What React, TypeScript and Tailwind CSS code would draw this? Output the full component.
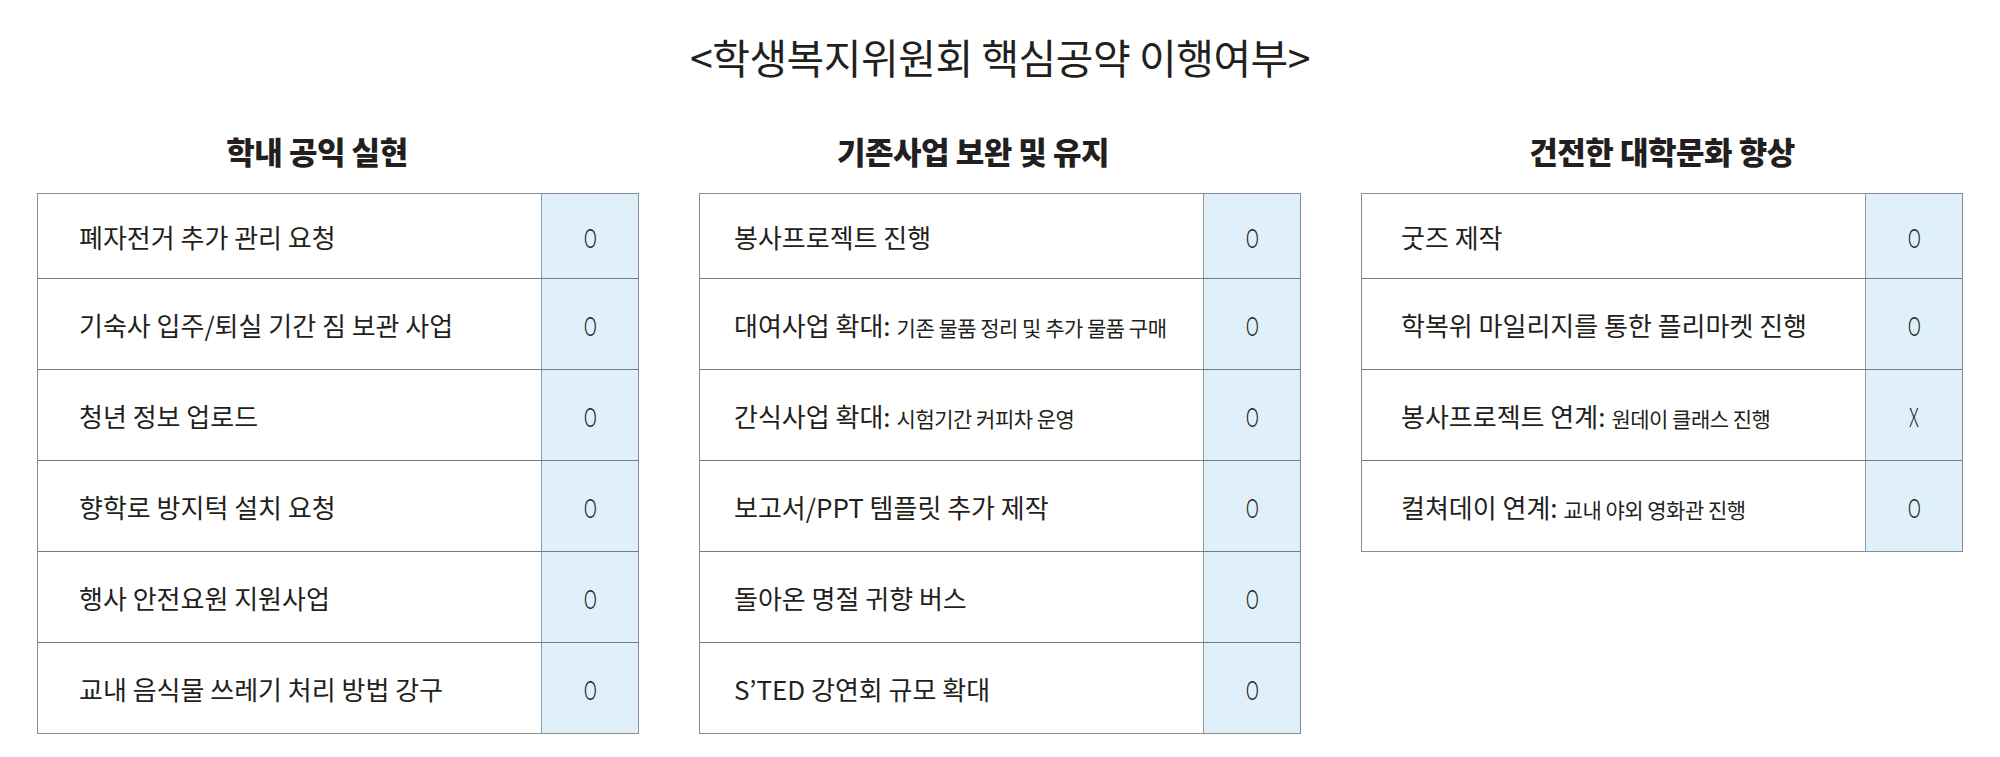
import React from 'react';

type Item = { main: string; sub?: string; status: string };

type Section = { title: string; headShift: string; textPad: string; items: Item[] };

const sections: Section[] = [
  {
    title: '학내 공익 실현',
    headShift: 'pr-[42px]',
    textPad: 'pl-[41px]',
    items: [
      { main: '폐자전거 추가 관리 요청', status: 'O' },
      { main: '기숙사 입주/퇴실 기간 짐 보관 사업', status: 'O' },
      { main: '청년 정보 업로드', status: 'O' },
      { main: '향학로 방지턱 설치 요청', status: 'O' },
      { main: '행사 안전요원 지원사업', status: 'O' },
      { main: '교내 음식물 쓰레기 처리 방법 강구', status: 'O' },
    ],
  },
  {
    title: '기존사업 보완 및 유지',
    headShift: 'pr-[54px]',
    textPad: 'pl-[34px]',
    items: [
      { main: '봉사프로젝트 진행', status: 'O' },
      { main: '대여사업 확대:', sub: '기존 물품 정리 및 추가 물품 구매', status: 'O' },
      { main: '간식사업 확대:', sub: '시험기간 커피차 운영', status: 'O' },
      { main: '보고서/PPT 템플릿 추가 제작', status: 'O' },
      { main: '돌아온 명절 귀향 버스', status: 'O' },
      { main: 'S’TED 강연회 규모 확대', status: 'O' },
    ],
  },
  {
    title: '건전한 대학문화 향상',
    headShift: 'pr-0',
    textPad: 'pl-[39px]',
    items: [
      { main: '굿즈 제작', status: 'O' },
      { main: '학복위 마일리지를 통한 플리마켓 진행', status: 'O' },
      { main: '봉사프로젝트 연계:', sub: '원데이 클래스 진행', status: 'X' },
      { main: '컬쳐데이 연계:', sub: '교내 야외 영화관 진행', status: 'O' },
    ],
  },
];

export default function App() {
  return (
    <div className="w-[2000px] h-[757px] bg-white text-[#231f20] font-['Noto_Sans_CJK_KR','Noto_Sans',sans-serif] pt-[33px]">
      {/* page title */}
      <h1 className="h-[46px] leading-[46px] text-center text-[41px] font-normal tracking-[-0.5px]">
        &lt;학생복지위원회 핵심공약 이행여부&gt;
      </h1>

      <div className="mt-[52px] flex justify-center gap-[60px]">
        {sections.map((sec) => (
          <div key={sec.title} className="w-[602px] flex flex-col">
            <h2
              className={`h-[40px] leading-[40px] text-center text-[31px] font-black tracking-[-0.5px] mb-[22px] ${sec.headShift}`}
            >
              {sec.title}
            </h2>

            <div className="border border-[#8c8c8c]">
              {sec.items.map((it, i) => (
                <div
                  key={it.main}
                  className={`flex ${i === 0 ? 'h-[84px]' : 'h-[91px] border-t border-[#7a7a7a]'}`}
                >
                  <div className={`flex-1 flex items-baseline self-center whitespace-nowrap ${sec.textPad}`}>
                    <span className="text-[26px]">{it.main}</span>
                    {it.sub && <span className="text-[21px] tracking-[-0.5px] ml-[6px]">{it.sub}</span>}
                  </div>
                  <div className="w-[97px] flex items-center justify-center bg-[#dff0fb] border-l border-[#8c9aa5]">
                    <span className="text-[26px] font-light inline-block scale-x-[0.7]">{it.status}</span>
                  </div>
                </div>
              ))}
            </div>
          </div>
        ))}
      </div>
    </div>
  );
}
